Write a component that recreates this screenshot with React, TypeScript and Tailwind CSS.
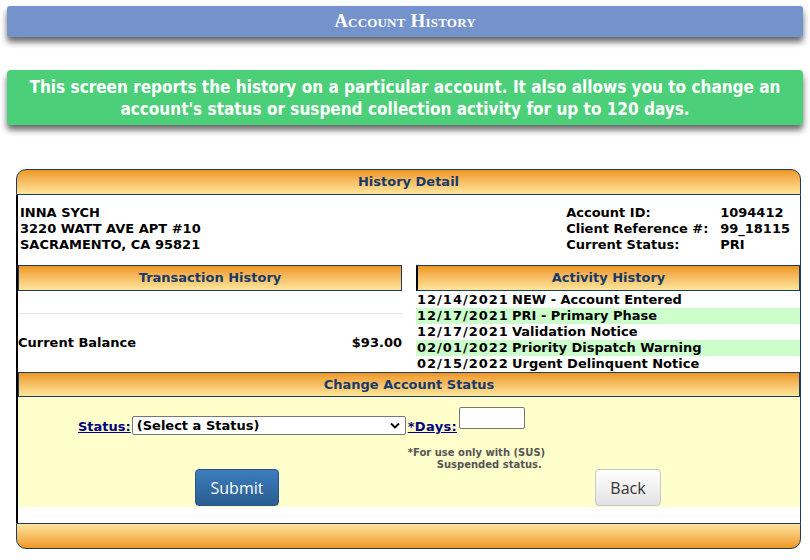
import React from "react";

const navy = "text-[#163a6b]";

function OrangeBar({ children, className = "" }: { children?: React.ReactNode; className?: string }) {
  return (
    <div
      className={`flex items-center justify-center bg-gradient-to-b from-[#ee971c] to-[#fde69a] border border-[#1b3b63] text-[13px] font-bold ${navy} ${className}`}
    >
      {children}
    </div>
  );
}

const activity = [
  ["12/14/2021", "NEW - Account Entered"],
  ["12/17/2021", "PRI - Primary Phase"],
  ["12/17/2021", "Validation Notice"],
  ["02/01/2022", "Priority Dispatch Warning"],
  ["02/15/2022", "Urgent Delinquent Notice"],
];

export default function App() {
  return (
    <div className="w-[810px] h-[560px] bg-white overflow-hidden font-['DejaVu_Sans',Verdana,sans-serif] text-black">
      {/* Title bar */}
      <div className="pt-[6px] px-[7px]">
        <div className="h-[31px] bg-[#7493cc] rounded-[3px] shadow-[0_5px_6px_rgba(0,0,0,0.6)] flex items-center justify-center">
          <span className="font-['Liberation_Serif',serif] font-bold text-[19px] text-white [font-variant:small-caps] tracking-[0.2px]">
            Account History
          </span>
        </div>
      </div>

      {/* Info box */}
      <div className="mt-[33px] mx-[7px] bg-[#4ccf79] rounded-[4px] shadow-[0_5px_6px_rgba(0,0,0,0.6)] h-[55px] flex items-center justify-center">
        <p className="text-center text-white font-bold text-[17px] leading-[22px] font-['DejaVu_Sans_Condensed',sans-serif]">
          This screen reports the history on a particular account. It also allows you to change an
          <br />
          account's status or suspend collection activity for up to 120 days.
        </p>
      </div>

      {/* Main panel */}
      <div className="mt-[44px] ml-[16px] w-[785px]">
        <OrangeBar className="h-[26px] rounded-t-[10px]">History Detail</OrangeBar>
        <div className="border-l-2 border-l-black border-r border-r-[#1b3b63] bg-white">
          <div className="flex items-start justify-between pt-[10px] pl-[2px] pr-[10px] text-[13px] font-bold leading-[16px] h-[70px]">
            <div>
              <div>INNA SYCH</div>
              <div>3220 WATT AVE APT #10</div>
              <div>SACRAMENTO, CA 95821</div>
            </div>
            <div className="grid grid-cols-[154px_auto] content-start">
              <div>Account ID:</div>
              <div>1094412</div>
              <div>Client Reference #:</div>
              <div>99_18115</div>
              <div>Current Status:</div>
              <div>PRI</div>
            </div>
          </div>

          <div className="flex">
            <div className="w-[384px]">
              <OrangeBar className="h-[26px]">Transaction History</OrangeBar>
              <div className="h-[23px] border-b border-[#e8e8e8]" />
              <div className="h-[57px] flex items-center justify-between text-[13px] font-bold">
                <span>Current Balance</span>
                <span>$93.00</span>
              </div>
            </div>
            <div className="ml-[14px] flex-1">
              <OrangeBar className="h-[26px] border-l-2 border-l-black">Activity History</OrangeBar>
              <div className="pt-px">
                {activity.map(([d, t], i) => (
                  <div
                    key={i}
                    className={`flex h-[16px] items-center text-[13px] font-bold ${i % 2 === 1 ? "bg-[#ccffcc]" : ""}`}
                  >
                    <span className="w-[96px] pl-px tracking-[1px]">{d}</span>
                    <span>{t}</span>
                  </div>
                ))}
              </div>
            </div>
          </div>

          <OrangeBar className="h-[25px]">Change Account Status</OrangeBar>
          <div className="bg-[#ffffcc] h-[110px] relative">
            <div className="flex items-start pt-[10px]">
              <span className="ml-[60px] mt-[10px] text-[13px] font-bold text-[#000080] underline">Status:</span>
              <div className="ml-px mt-[9px] w-[274px] h-[19px] border border-[#767676] rounded-[2px] bg-white flex items-center justify-between pl-[4px] pr-[5px]">
                <span className="text-[13px] font-bold">(Select a Status)</span>
                <svg width="10" height="7" viewBox="0 0 10 7">
                  <path d="M1 1.5 L5 5.5 L9 1.5" fill="none" stroke="#000" strokeWidth="1.8" />
                </svg>
              </div>
              <div className="ml-[2px]">
                <div className="flex items-start">
                  <span className="mt-[10px] text-[13px] font-bold text-[#000080] underline tracking-[0.3px]">*Days:</span>
                  <div className="ml-[2px] w-[66px] h-[22px] border border-[#767676] rounded-[2px] bg-white" />
                </div>
                <div className="mt-[10px] text-[10px] font-bold text-[#555] leading-[12px]">
                  <div>*For use only with (SUS)</div>
                  <div className="pl-[29px]">Suspended status.</div>
                </div>
              </div>
            </div>
            <div className="absolute left-[177px] top-[72px] w-[84px] h-[37px] rounded-[4px] border border-[#285584] bg-gradient-to-b from-[#3b7dbf] to-[#2b5d8f] text-white text-[16px] flex items-center justify-center font-['Open_Sans',sans-serif]">
              Submit
            </div>
            <div className="absolute left-[577px] top-[72px] w-[66px] h-[37px] rounded-[4px] border border-[#c8c8c8] bg-gradient-to-b from-[#ffffff] to-[#e2e2e2] text-[#333] text-[16px] flex items-center justify-center font-['Open_Sans',sans-serif]">
              Back
            </div>
          </div>
          <div className="h-[16px]" />
        </div>
        <div className="h-[26px] rounded-b-[10px] border border-[#1b3b63] bg-gradient-to-b from-[#fde69a] to-[#ee971c]" />
      </div>
    </div>
  );
}
